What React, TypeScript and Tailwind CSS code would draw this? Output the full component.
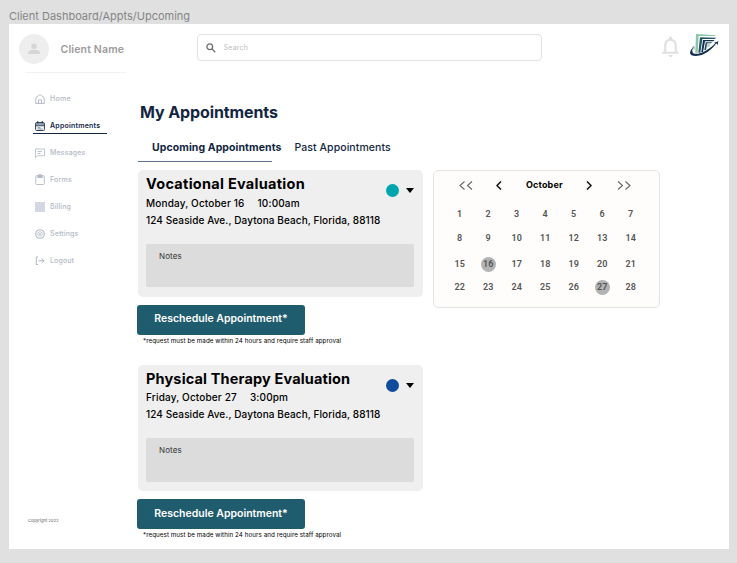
import type { ReactNode } from "react";

const inter = "font-['Inter','Liberation_Sans',sans-serif]";

function HomeIcon() {
  return (
    <svg viewBox="0 0 20 20" className="size-[10px]" fill="none" stroke="#b4bac6" strokeWidth="1.900">
      <path d="M1.500 7.500 10 1l8.500 6.500V19h-17zM7 19v-7.500h6V19" />
    </svg>
  );
}
function CalendarIcon() {
  return (
    <svg viewBox="0 0 20 20" className="size-[10px]" fill="none" stroke="#2c4058" strokeWidth="2">
      <rect x="1.200" y="3" width="17.600" height="16" rx="2" />
      <path d="M1 6h18M1 9.500h18M5.500 0v5M14.500 0v5" />
      <path d="M5 13.500h6M5 16h10" stroke="#8390a0" />
    </svg>
  );
}
function MessageIcon() {
  return (
    <svg viewBox="0 0 20 20" className="size-[10px]" fill="none" stroke="#b4bac6" strokeWidth="1.700">
      <path d="M1 2h18v13.500H5L1 19zM5 7h9M5 11h6" />
    </svg>
  );
}
function FormsIcon() {
  return (
    <svg viewBox="0 0 20 22" className="h-[11px] w-[10px]" fill="none" stroke="#b4bac6" strokeWidth="1.800">
      <rect x="1.500" y="3.500" width="17" height="17.500" rx="1.500" />
      <path d="M5.500 2.500h2l1-1.500h3l1 1.500h2V7h-9z" fill="#b4bac6" />
    </svg>
  );
}
function BillingIcon() {
  return (
    <svg viewBox="0 0 20 20" className="size-[10px]">
      <rect x="1" y="1" width="18" height="18" fill="#d3d7df" stroke="#bcc2cc" strokeWidth="1.500" strokeDasharray="2 1.500" />
    </svg>
  );
}
function SettingsIcon() {
  return (
    <svg viewBox="0 0 20 20" className="size-[10px]" fill="none" stroke="#b4bac6">
      <circle cx="10" cy="10" r="8.500" strokeWidth="2.400" />
      <circle cx="10" cy="10" r="4.500" strokeWidth="1.600" />
      <circle cx="10" cy="10" r="1.500" strokeWidth="1.500" />
    </svg>
  );
}
function LogoutIcon() {
  return (
    <svg viewBox="0 0 20 20" className="size-[10px]" fill="none" stroke="#aab1be" strokeWidth="1.900">
      <path d="M6 2H2.500v15H6M7 9.500h11M13.500 5l4.500 4.500L13.500 14" />
    </svg>
  );
}

const nav: { label: string; icon: ReactNode; track: string; active?: boolean }[] = [
  { label: "Home", icon: <HomeIcon />, track: "tracking-[0.3px]" },
  { label: "Appointments", icon: <CalendarIcon />, track: "tracking-[0.22px]", active: true },
  { label: "Messages", icon: <MessageIcon />, track: "tracking-[0.16px]" },
  { label: "Forms", icon: <FormsIcon />, track: "tracking-[0.2px]" },
  { label: "Billing", icon: <BillingIcon />, track: "tracking-[0.12px]" },
  { label: "Settings", icon: <SettingsIcon />, track: "tracking-[0.15px]" },
  { label: "Logout", icon: <LogoutIcon />, track: "tracking-[0.12px]" },
];

function Sidebar() {
  return (
    <aside className="flex w-[128.500px] shrink-0 flex-col">
      <div className="ml-[10px] mt-[10px] flex h-[30px] items-center">
        <div className="flex size-[30px] items-center justify-center rounded-full bg-[#eeeeee]">
          <svg viewBox="0 0 24 24" className="size-[12px]" fill="#d6d6d6">
            <circle cx="12" cy="6.500" r="5.500" />
            <path d="M0 22v-2c0-4.500 6-6.500 12-6.500s12 2 12 6.500v2z" />
          </svg>
        </div>
        <span className="ml-[11.500px] mt-[2px] whitespace-nowrap text-[10.500px] font-semibold leading-none tracking-[0.16px] text-[#9c9c9c]">Client Name</span>
      </div>
      <div className="ml-[16px] mt-[8px] h-px w-[101px] bg-[#f2f2f2]" />
      <nav className="ml-[24px] mt-[12px] flex flex-col">
        {nav.map((n) => (
          <div key={n.label} className={n.active ? "flex h-[27px] w-[74px] flex-col" : "flex h-[27px] flex-col"}>
            <div className="flex h-[27px] shrink-0 items-center pl-[2px]">
              {n.icon}
              <span className={`ml-[5px] whitespace-nowrap text-[7px] leading-none ${n.track} ${n.active ? "font-semibold text-[#12263f]" : "font-medium text-[#b4bac6]"}`}>{n.label}</span>
            </div>
            {n.active && <div className="-mt-[6px] h-px shrink-0 bg-[#12263f]" />}
          </div>
        ))}
      </nav>
      <span className="mb-[26.500px] ml-[19px] mt-auto whitespace-nowrap text-[4px] leading-none tracking-[0.08px] text-[#555]">Copyright 2022</span>
    </aside>
  );
}

function Logo() {
  return (
    <svg viewBox="0 0 90 72" className="h-[24px] w-[30px]" fill="none">
      <path d="M21 3 84 7 76 9 29 9 26 59H19z" fill="#8cc5a5" />
      <path d="M33 13 82 14 77 18H40L34 59H28z" fill="#24566a" />
      <path d="M42 21H77L72 25H48L42 57H37z" fill="#12304c" />
      <path d="M50 28H70L66 31H55L51 51H46z" fill="#1c4a62" />
      <path d="M52 33h9v8H52zM54 34l5 5m1-6-6 7" stroke="#8796a5" strokeWidth="1.300" />
      <path d="M14 42C-2 56-1 69 21 69 48 68 69 49 82 31L86 36 88 25 75 29 79 30C65 46 46 58 28 62 11 65 5 57 14 42z" fill="#12304c" />
      <path d="M10 44l5-4v9" stroke="#5c7184" strokeWidth="2" />
    </svg>
  );
}

function TopBar() {
  return (
    <header className="flex h-[48px] shrink-0 items-start pl-[59.500px] pt-[10px]">
      <div className="flex h-[27px] w-[345px] items-center rounded-[4px] border border-[#e2e2e2] pl-[8px]">
        <svg viewBox="0 0 20 20" className="size-[10px]" fill="none" stroke="#6f6f6f" strokeWidth="2.600">
          <circle cx="7.500" cy="7.500" r="5.700" />
          <path d="m12 12 6.500 6.500" />
        </svg>
        <span className="ml-[7.500px] text-[7px] leading-none tracking-[0.25px] text-[#bdbdbd]">Search</span>
      </div>
      <svg viewBox="4 2 16 20" className="ml-[119.500px] mt-[2px] h-[21px] w-[17px]" fill="#e0e0e0">
        <path d="M12 22c1.100 0 2-.9 2-2h-4c0 1.100.9 2 2 2m6-6v-5c0-3.070-1.630-5.640-4.500-6.320V4c0-.83-.67-1.500-1.500-1.500s-1.500.67-1.500 1.500v.68C7.640 5.360 6 7.920 6 11v5l-2 2v1h16v-1zm-2 1H8v-6c0-2.480 1.510-4.500 4-4.500s4 2.020 4 4.500z" />
      </svg>
      <div className="-mt-[1px] ml-[10px]"><Logo /></div>
    </header>
  );
}

interface Appointment {
  title: string;
  titleTrack: string;
  date: string;
  time: string;
  dot: string;
}

const appointments: Appointment[] = [
  { title: "Vocational Evaluation", titleTrack: "tracking-[0.28px]", date: "Monday, October 16", time: "10:00am", dot: "bg-[#00a5ad]" },
  { title: "Physical Therapy Evaluation", titleTrack: "tracking-[0.15px]", date: "Friday, October 27", time: "3:00pm", dot: "bg-[#0f4c9c]" },
];

function AppointmentCard({ a }: { a: Appointment }) {
  return (
    <section className="flex h-[194.500px] shrink-0 flex-col items-start">
      <div className="flex h-[126.500px] w-[285.500px] flex-col rounded-[5px] bg-[#efefef] pl-[8.500px] pr-[9px] pt-[5px] text-black">
        <div className="flex">
          <div className="flex flex-col">
            <h2 className={`flex h-[19px] items-center whitespace-nowrap text-[14.500px] font-bold leading-none ${a.titleTrack}`}>{a.title}</h2>
            <div className="flex h-[17px] items-center gap-[13px] whitespace-nowrap text-[10px] font-medium leading-none tracking-[0.16px]">
              <span>{a.date}</span>
              <span>{a.time}</span>
            </div>
            <p className="flex h-[17px] items-center whitespace-nowrap text-[10px] font-medium leading-none tracking-[0.09px]">124 Seaside Ave., Daytona Beach, Florida, 88118</p>
          </div>
          <div className="ml-auto mt-[9px] flex h-[13px] items-center gap-[7px]">
            <span className={`size-[13px] rounded-full ${a.dot}`} />
            <svg viewBox="0 0 8 5" className="h-[5px] w-[8px]"><path d="M0 0h8L4 5z" fill="#000" /></svg>
          </div>
        </div>
        <div className="mt-[15.500px] h-[43.500px] rounded-[2px] bg-[#dcdcdc] pl-[13px] pt-[8px] text-[8px] leading-none tracking-[0.1px] text-[#333]">Notes</div>
      </div>
      <button className="-ml-[0.500px] mt-[8px] flex h-[30px] w-[168px] items-center justify-center rounded-[3px] bg-[#1f5c6e] text-[10.500px] font-semibold leading-none text-white">Reschedule Appointment*</button>
      <p className="ml-[5.500px] mt-[3px] whitespace-nowrap text-[6.250px] leading-none tracking-[0.06px] text-black">*request must be made within 24 hours and require staff approval</p>
    </section>
  );
}

function Chevrons({ d, w, color, sw }: { d: string; w: number; color: string; sw: number }) {
  return (
    <svg viewBox={`0 0 ${w} 9`} width={w} height="9" fill="none" stroke={color} strokeWidth={sw}><path d={d} /></svg>
  );
}

const weeks = [
  { start: 1, height: "h-[24px]" },
  { start: 8, height: "h-[24px]" },
  { start: 15, height: "h-[27px]" },
  { start: 22, height: "h-[20px]" },
];

function Calendar() {
  return (
    <section className="h-[138px] w-[227px] rounded-[5px] border border-[#e5e5e3] bg-[#fefdfb]">
      <div className="flex h-[29px] items-center pl-[25px]">
        <Chevrons w={14} d="M5.500.5 1 4.500l4.500 4M13 .5 8.500 4.500l4.500 4" color="#666" sw={1.100} />
        <div className="ml-[22.500px] flex"><Chevrons w={6} d="M5 .5 1 4.500l4 4" color="#111" sw={1.500} /></div>
        <span className="ml-[24.500px] w-[38px] whitespace-nowrap pb-[3px] text-[9px] font-bold leading-none tracking-[0.15px] text-black">October</span>
        <div className="ml-[22px] flex"><Chevrons w={6} d="m1 .5 4 4-4 4" color="#111" sw={1.500} /></div>
        <div className="ml-[25px] flex"><Chevrons w={14} d="m1 .5 4.500 4-4.500 4M8.500.5l4.500 4-4.500 4" color="#666" sw={1.100} /></div>
      </div>
      <div className="flex flex-col pl-[11.500px] pt-[2.700px] font-['Roboto',sans-serif] text-[9px] font-semibold leading-none text-[#555]">
        {weeks.map((r) => (
          <div key={r.start} className={`flex items-center ${r.height}`}>
            {Array.from({ length: 7 }, (_, i) => r.start + i).map((d) => (
              <div key={d} className="flex w-[28.500px] justify-center">
                <span className={d === 16 || d === 27 ? "flex size-[15px] items-center justify-center rounded-full bg-[#b3b3b3] tracking-[0.2px]" : "tracking-[0.2px]"}>{d}</span>
              </div>
            ))}
          </div>
        ))}
      </div>
    </section>
  );
}

export default function App() {
  return (
    <div className={`flex h-[563px] w-[737px] flex-col overflow-hidden bg-[#e0e0e0] ${inter}`}>
      <div className="flex h-[24px] items-end pb-[1px] pl-[9px] text-[11px] text-[#858585]"><span className="leading-[13px]">Client Dashboard/Appts/Upcoming</span></div>
      <main className="ml-[9px] flex h-[525px] w-[720px] bg-white">
        <Sidebar />
        <div className="flex flex-1 flex-col">
          <TopBar />
          <h1 className="ml-[2.500px] mt-[30px] flex h-[20px] shrink-0 items-center text-[16px] font-bold leading-none tracking-[-0.1px] text-[#12263f]">My Appointments</h1>
          <div className="ml-[14.500px] mt-[18px] flex h-[16px] shrink-0 items-center gap-[13px] whitespace-nowrap text-[10.500px] leading-none tracking-[0.08px] text-[#12263f]">
            <span className="font-bold">Upcoming Appointments</span>
            <span className="font-medium">Past Appointments</span>
          </div>
          <div className="mt-[5px] h-px w-[134.500px] shrink-0 bg-[#5f7590]" />
          <div className="mt-[8px] flex shrink-0 gap-[10px]">
            <div className="flex flex-col">
              {appointments.map((a) => <AppointmentCard key={a.title} a={a} />)}
            </div>
            <Calendar />
          </div>
        </div>
      </main>
    </div>
  );
}
